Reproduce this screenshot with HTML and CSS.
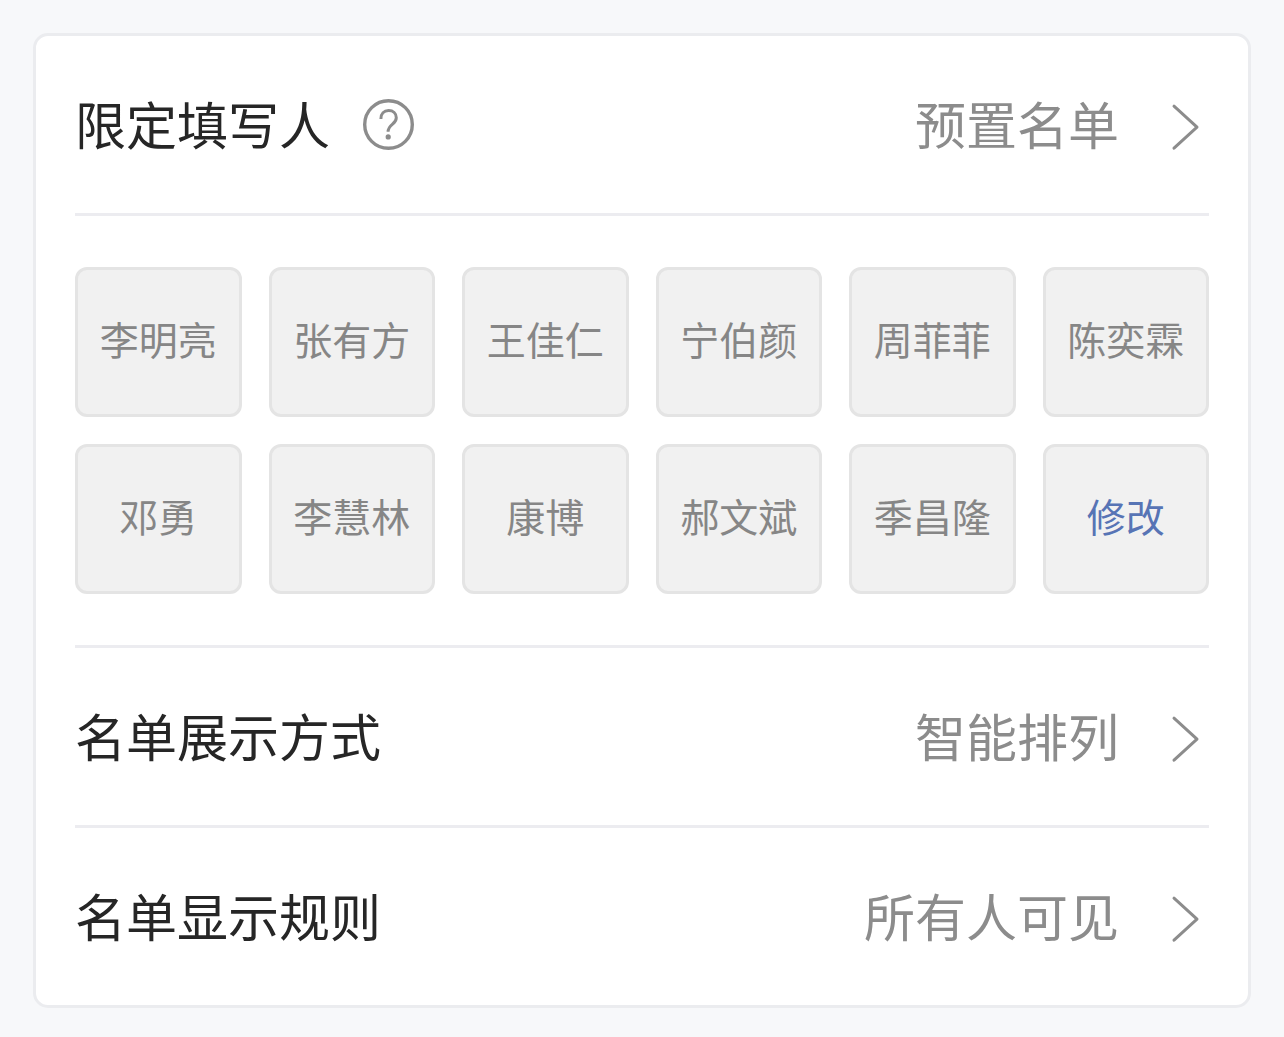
FILE: index.html
```
<!DOCTYPE html>
<html lang="zh-CN">
<head>
    <meta charset="UTF-8">
    <meta name="viewport" content="width=device-width, initial-scale=1">
    <title>限定填写人</title>
    <link rel="stylesheet" href="styles.css">
</head>
<body>
    <main class="card">
        <div class="row">
            <span class="label" id="label-who">限定填写人</span>
            <button class="help" aria-label="帮助">
                <svg width="51" height="52" viewBox="0 0 51 52" fill="none" stroke="currentColor">
                    <circle cx="25.5" cy="26.5" r="23.8" stroke-width="3.4"/>
                    <path d="M17.9 20.9C17.9 15.9 21 12.6 25.6 12.6C30.2 12.6 33.3 15.6 33.3 19.7C33.3 22.6 31.7 24.4 29.3 26.4C26.4 28.8 25.1 30.4 25.1 33.8" stroke-width="3"/>
                    <circle cx="25.2" cy="38.9" r="2.6" fill="currentColor" stroke="none"/>
                </svg>
            </button>
            <button class="value" aria-describedby="label-who">
                预置名单
                <svg class="arrow" width="28" height="48" viewBox="0 0 28 48">
                    <path d="M4 3.2L27 24.2L4 45.2"/>
                </svg>
            </button>
        </div>

        <div class="names">
            <div class="name">李明亮</div>
            <div class="name">张有方</div>
            <div class="name">王佳仁</div>
            <div class="name">宁伯颜</div>
            <div class="name">周菲菲</div>
            <div class="name">陈奕霖</div>
            <div class="name">邓勇</div>
            <div class="name">李慧林</div>
            <div class="name">康博</div>
            <div class="name">郝文斌</div>
            <div class="name">季昌隆</div>
            <button class="name edit">修改</button>
        </div>

        <div class="row">
            <span class="label" id="label-layout">名单展示方式</span>
            <button class="value" aria-describedby="label-layout">
                智能排列
                <svg class="arrow" width="28" height="48" viewBox="0 0 28 48">
                    <path d="M4 3.2L27 24.2L4 45.2"/>
                </svg>
            </button>
        </div>

        <div class="row">
            <span class="label" id="label-rule">名单显示规则</span>
            <button class="value" aria-describedby="label-rule">
                所有人可见
                <svg class="arrow" width="28" height="48" viewBox="0 0 28 48">
                    <path d="M4 3.2L27 24.2L4 45.2"/>
                </svg>
            </button>
        </div>
    </main>
</body>
</html>
```

FILE: styles.css
```
* {
    box-sizing: border-box;
}

body {
    margin: 0;
    padding: 33px;
    background: #f7f8fa;
    font-family: "Noto Sans CJK SC", sans-serif;
    color: #262626;
}

button {
    padding: 0;
    border: none;
    background: none;
    font-family: inherit;
    cursor: pointer;
}

.card {
    padding: 0 39px;
    background: #fff;
    border: 3px solid #ebecef;
    border-radius: 15px;
}

.row {
    display: flex;
    align-items: center;
    padding: 50px 0 52px;
    font-size: 51px;
    line-height: 75px;
}

.row + .names,
.names + .row,
.row + .row {
    border-top: 3px solid #ececf0;
}

.help {
    display: flex;
    margin-left: 33px;
    color: #8c8c8c;
}

.value {
    display: flex;
    align-items: center;
    gap: 51px;
    margin-left: auto;
    padding-right: 11px;
    font-size: 51px;
    line-height: 75px;
    color: #8c8c8c;
}

.arrow {
    margin-top: 6px;
    fill: none;
    stroke: #8c8c8c;
    stroke-width: 3;
    stroke-linecap: round;
    stroke-linejoin: round;
    overflow: visible;
}

.names {
    display: grid;
    grid-template-columns: repeat(6, 1fr);
    gap: 27px;
    padding: 51px 0;
}

.name {
    display: flex;
    align-items: center;
    justify-content: center;
    height: 150px;
    padding-bottom: 8px;
    background: #f1f1f1;
    border: 3px solid #e4e4e4;
    border-radius: 12px;
    font-size: 39px;
    line-height: 57px;
    color: #868686;
}

.edit {
    color: #5774b5;
}
```
